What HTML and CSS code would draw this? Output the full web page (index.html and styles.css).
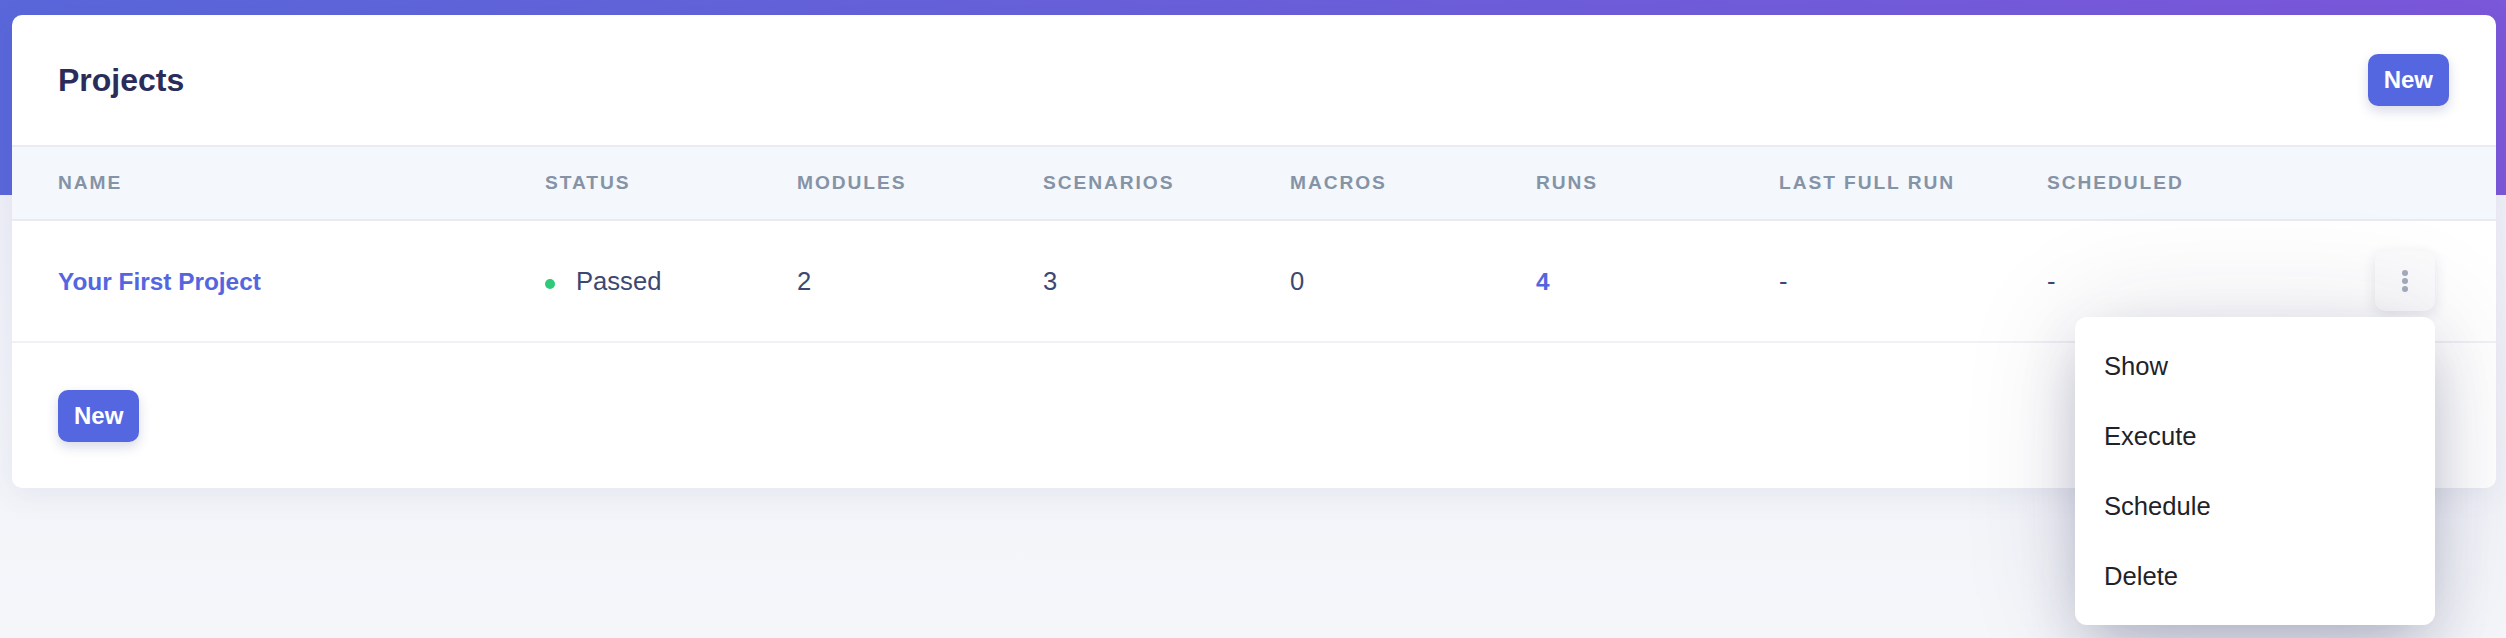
FILE: index.html
```
<!DOCTYPE html>
<html lang="en">
<head>
<meta charset="utf-8">
<title>Projects</title>
<link rel="stylesheet" href="styles.css">
</head>
<body>
<div class="page">
  <section class="card">
    <header class="card-header">
      <h1 class="title">Projects</h1>
      <button class="btn">New</button>
    </header>
    <table class="table">
      <colgroup>
        <col class="c-name"><col class="c-status"><col class="c-modules"><col class="c-scenarios"><col class="c-macros"><col class="c-runs"><col class="c-last"><col class="c-sched"><col class="c-actions">
      </colgroup>
      <thead>
        <tr>
          <th class="first">Name</th>
          <th>Status</th>
          <th>Modules</th>
          <th>Scenarios</th>
          <th>Macros</th>
          <th>Runs</th>
          <th>Last Full Run</th>
          <th>Scheduled</th>
          <th></th>
        </tr>
      </thead>
      <tbody>
        <tr>
          <td class="first"><a class="link" href="#">Your First Project</a></td>
          <td><span class="status"><span class="dot"></span>Passed</span></td>
          <td>2</td>
          <td>3</td>
          <td>0</td>
          <td><a class="link" href="#">4</a></td>
          <td>-</td>
          <td>-</td>
          <td class="actions">
            <div class="menu-wrap">
              <button class="kebab" aria-label="Actions">
                <svg width="8" height="24" viewBox="0 0 8 24"><circle cx="4" cy="4" r="3" fill="#a3adbb"/><circle cx="4" cy="12" r="3" fill="#a3adbb"/><circle cx="4" cy="20" r="3" fill="#a3adbb"/></svg>
              </button>
              <ul class="menu">
                <li class="menu-item">Show</li>
                <li class="menu-item">Execute</li>
                <li class="menu-item">Schedule</li>
                <li class="menu-item">Delete</li>
              </ul>
            </div>
          </td>
        </tr>
      </tbody>
    </table>
    <footer class="card-footer">
      <button class="btn">New</button>
    </footer>
  </section>
</div>
</body>
</html>
```
FILE: styles.css
```
* { box-sizing: border-box; }
html, body { margin: 0; height: 100%; }
body {
  font-family: "Liberation Sans", Arial, Helvetica, sans-serif;
  background: #f4f5fa;
}
.page {
  min-height: 638px;
  padding: 15px 10px 0 12px;
  background:
    linear-gradient(to right, #5967da, #7b57d9) top left / 100% 195px no-repeat,
    linear-gradient(to bottom, #eeeff7 195px, #f5f6fa 600px);
}
.card {
  background: #fff;
  border-radius: 10px;
  box-shadow: 0 6px 30px rgba(70, 75, 130, 0.08);
}
.card-header {
  height: 130px;
  padding: 0 47px 0 46px;
  display: flex;
  align-items: center;
  justify-content: space-between;
}
.title {
  margin: 0;
  font-size: 32px;
  font-weight: 700;
  color: #2a2c5a;
}
.btn {
  font-family: inherit;
  height: 52px;
  padding: 0 16px;
  border: 0;
  border-radius: 10px;
  background: #5467e0;
  color: #fff;
  font-size: 24px;
  font-weight: 700;
  box-shadow: 0 5px 12px rgba(40, 50, 120, 0.18);
}
.table {
  width: 100%;
  table-layout: fixed;
  border-collapse: separate;
  border-spacing: 0;
}
.c-name { width: 533px; }
.c-status { width: 252px; }
.c-modules { width: 246px; }
.c-scenarios { width: 247px; }
.c-macros { width: 246px; }
.c-runs { width: 243px; }
.c-last { width: 268px; }
.c-sched { width: 200px; }
.table th {
  height: 76px;
  padding: 0;
  background: #f4f7fc;
  border-top: 2px solid #e8ebf1;
  border-bottom: 2px solid #e8ebf1;
  text-align: left;
  font-size: 19.2px;
  font-weight: 700;
  letter-spacing: 0.1em;
  text-transform: uppercase;
  color: #8593a6;
}
.table td {
  height: 122px;
  padding: 0;
  border-bottom: 2px solid #eff1f4;
  font-size: 25.6px;
  color: #3d4870;
  vertical-align: middle;
}
.table .first { padding-left: 46px; }
.link {
  color: #5466df;
  font-size: 24.4px;
  font-weight: 700;
  text-decoration: none;
}
.status { display: inline-flex; align-items: center; }
.dot {
  width: 10px;
  height: 10px;
  margin: 6px 21px 0 0;
  border-radius: 50%;
  background: #30c879;
}
.table td.actions {
  text-align: right;
  padding-right: 61px;
}
.menu-wrap {
  position: relative;
  display: inline-block;
  vertical-align: middle;
}
.kebab {
  width: 60px;
  height: 60px;
  border: 0;
  border-radius: 10px;
  background: #fbfbfc;
  display: flex;
  align-items: center;
  justify-content: center;
  box-shadow: 0 4px 14px rgba(40, 45, 80, 0.12);
}
.kebab svg { display: block; }
.menu {
  position: absolute;
  top: 66px;
  right: 0;
  width: 360px;
  margin: 0;
  padding: 14px 0;
  list-style: none;
  background: #fff;
  border-radius: 12px;
  text-align: left;
  box-shadow: 0 25px 60px -10px rgba(30, 35, 80, 0.3), 0 0 120px rgba(30, 35, 80, 0.12);
  z-index: 5;
}
.menu-item {
  height: 70px;
  line-height: 70px;
  padding: 0 29px;
  font-size: 25.6px;
  color: #1f2329;
}
.card-footer {
  height: 145px;
  padding: 0 46px;
  display: flex;
  align-items: center;
}
```
